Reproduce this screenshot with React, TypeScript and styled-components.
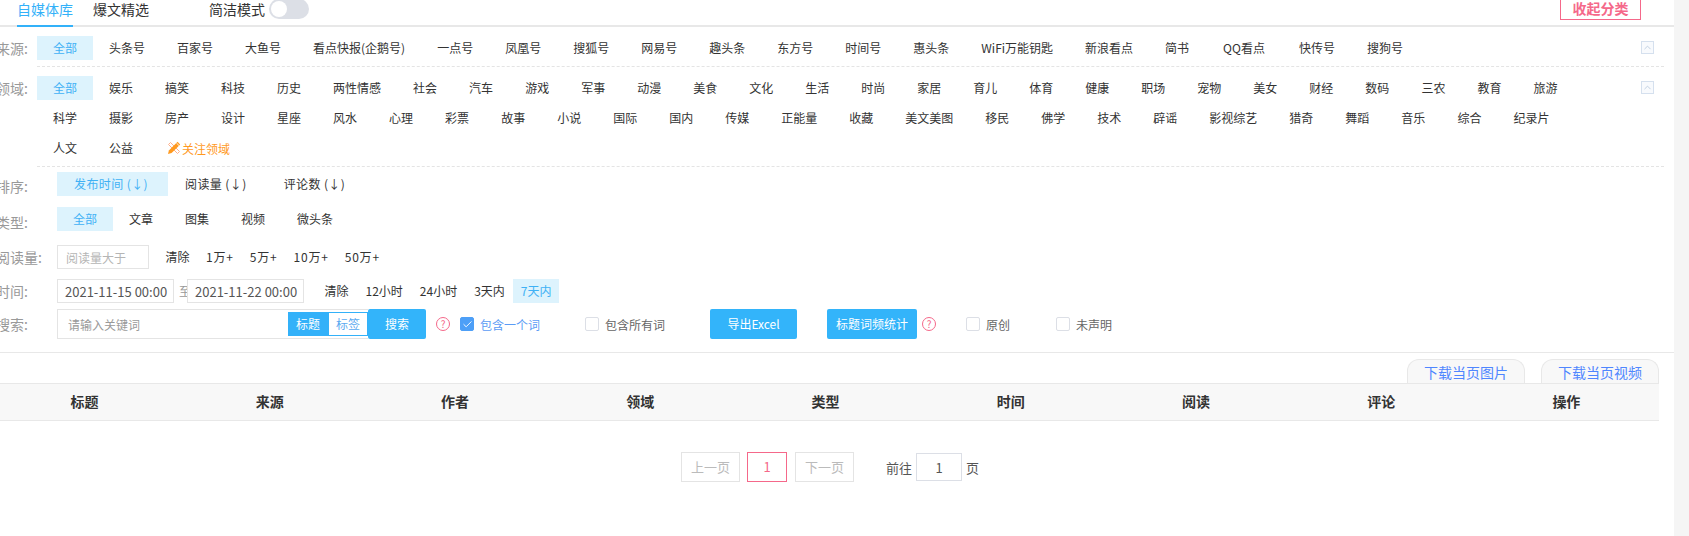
import styled, { createGlobalStyle } from "styled-components";
import { Check, ChevronUp } from "lucide-react";

const GlobalStyle = createGlobalStyle`
    html, body { margin: 0; padding: 0; height: 100%; overflow: hidden; background: #fff; }
    body { font-family: "Noto Sans CJK SC", "Open Sans", sans-serif; font-size: 12px; color: #333; }
    input { font-family: inherit; outline: none; }
`

const Layout = styled.div`display: flex; width: 1689px; height: 536px; overflow: hidden;`
const Main = styled.div`width: 1674px; flex: none;`
const Scrollbar = styled.div`width: 15px; flex: none; background: #f5f5f5;`

const Header = styled.div`
    display: flex;
    height: 25px;
    border-bottom: 2px solid #e8e8e8;
    padding-left: 17px;
`
const Tab = styled.div<{ $active?: boolean }>`
    height: 25px;
    margin-right: 20px;
    font-size: 14px;
    line-height: 18px;
    color: ${p => p.$active ? "#33b1f9" : "#333"};
    border-bottom: 2px solid ${p => p.$active ? "#33b1f9" : "transparent"};
`
const SwitchLabel = styled.div`margin-left: 40px; font-size: 14px; line-height: 18px; color: #333;`
const Switch = styled.div`
    position: relative;
    width: 40px;
    height: 20px;
    margin: -1px 0 0 4px;
    border-radius: 10px;
    background: #dcdfe6;
`
const Knob = styled.span`
    position: absolute;
    top: 2px;
    left: 2px;
    width: 16px;
    height: 16px;
    border-radius: 50%;
    background: #fff;
`
const CollapseAll = styled.div`
    margin: -6px 33px 0 auto;
    width: 79px;
    height: 24px;
    border: 1px solid #f5688a;
    color: #f5688a;
    font-size: 14px;
    font-weight: 700;
    line-height: 26px;
    text-align: center;
`

const Filters = styled.div`margin-left: -4px; width: 1668px; padding-top: 9px;`
const Row = styled.div<{ $top?: number }>`
    display: flex;
    align-items: flex-start;
    margin-top: ${p => p.$top ?? 0}px;
    min-height: 24px;
`
const Label = styled.div<{ $width: number; $drop?: number }>`
    flex: none;
    width: ${p => p.$width}px;
    line-height: 24px;
    font-size: 14px;
    color: #999;
    white-space: nowrap;
    padding-top: ${p => p.$drop ?? 0}px;
`
const Tags = styled.div`
    display: flex;
    flex-wrap: wrap;
    row-gap: 6px;
    width: 1580px;
`
const Tag = styled.div<{ $active?: boolean; $pad?: number }>`
    height: 24px;
    line-height: 24px;
    padding: 0 ${p => p.$pad ?? 16}px;
    white-space: nowrap;
    color: ${p => p.$active ? "#3fb1f5" : "#333"};
    background: ${p => p.$active ? "#ddf3fd" : "transparent"};
`
const SortTag = styled(Tag)`
    padding: 0 20px 0 17px;
    letter-spacing: 0.4px;
`
const Follow = styled.div`
    display: flex;
    align-items: center;
    gap: 1px;
    height: 24px;
    margin-left: 18px;
    color: #ff9a1f;
`
const Fold = styled.div`
    display: flex;
    align-items: center;
    justify-content: center;
    flex: none;
    width: 11px;
    height: 11px;
    margin: 5px 0 0 24px;
    border: 1px solid #d5e0ee;
    background: #f8fafd;
    color: #bccddf;
`
const Divider = styled.div`
    margin: 6px 0 0 41px;
    border-top: 1px dashed #e4e4e4;
`
const TextInput = styled.input<{ $width: number }>`
    box-sizing: border-box;
    flex: none;
    width: ${p => p.$width}px;
    height: 24px;
    padding: 0 8px;
    border: 1px solid #e4e4e4;
    font-size: 12px;
    color: #555;
    &::placeholder { color: #b5b5b5; }
`
const DateInput = styled(TextInput)`font-size: 13px; padding: 0 0 0 7px;`
const DateSep = styled.span`
    flex: none;
    width: 8px;
    padding-left: 5px;
    color: #999;
    white-space: nowrap;
    line-height: 24px;
    overflow: hidden;
`
const Links = styled.div<{ $left: number }>`
    display: flex;
    margin-left: ${p => p.$left}px;
`
const QuickLink = styled.div<{ $active?: boolean; $wide?: boolean }>`
    height: 24px;
    line-height: 24px;
    padding: 0 ${p => p.$wide ? 8 : p.$active ? 7.5 : 8.5}px;
    white-space: nowrap;
    letter-spacing: ${p => p.$wide ? "0.8px" : "0"};
    color: ${p => p.$active ? "#3fb1f5" : "#333"};
    background: ${p => p.$active ? "#ddf3fd" : "transparent"};
`

const SearchRow = styled.div`display: flex; align-items: center; height: 30px; margin-top: 6px;`
const SearchBox = styled.div`
    display: flex;
    align-items: center;
    box-sizing: border-box;
    flex: none;
    width: 311px;
    height: 30px;
    border: 1px solid #e4e4e4;
    border-right: none;
`
const SearchInput = styled.input`
    flex: 1;
    min-width: 0;
    border: none;
    padding: 0 10px;
    font-size: 12px;
    &::placeholder { color: #999; }
`
const Toggle = styled.div<{ $active?: boolean }>`
    box-sizing: border-box;
    width: 40px;
    height: 24px;
    line-height: 22px;
    text-align: center;
    border: 1px solid #33b1f9;
    color: ${p => p.$active ? "#fff" : "#5aa9f0"};
    background: ${p => p.$active ? "#33b1f9" : "#fff"};
`
const Button = styled.div<{ $width: number; $left?: number }>`
    flex: none;
    width: ${p => p.$width}px;
    height: 30px;
    margin-left: ${p => p.$left ?? 0}px;
    border-radius: 2px;
    background: #33b4fa;
    color: #fff;
    line-height: 30px;
    text-align: center;
`
const Help = styled.span<{ $left: number }>`
    flex: none;
    box-sizing: border-box;
    width: 14px;
    height: 14px;
    margin-left: ${p => p.$left}px;
    border: 1px solid #f5688a;
    border-radius: 50%;
    color: #f5688a;
    font-size: 10px;
    line-height: 12px;
    text-align: center;
`
const Box = styled.span<{ $checked?: boolean; $left: number }>`
    display: flex;
    align-items: center;
    justify-content: center;
    flex: none;
    box-sizing: border-box;
    width: 14px;
    height: 14px;
    margin-left: ${p => p.$left}px;
    border-radius: 2px;
    border: 1px solid ${p => p.$checked ? "#4d9ff7" : "#dcdfe6"};
    background: ${p => p.$checked ? "#4d9ff7" : "#fff"};
    color: #fff;
`
const BoxText = styled.span<{ $checked?: boolean }>`
    margin-left: 6px;
    white-space: nowrap;
    color: ${p => p.$checked ? "#5b9cf5" : "#666"};
`

const Results = styled.div`margin-top: 13px; border-top: 1px solid #e8e8e8;`
const ResultTabs = styled.div`display: flex; justify-content: flex-end; gap: 16px; width: 1659px; padding-top: 6px;`
const ResultTab = styled.div`
    box-sizing: border-box;
    width: 118px;
    height: 24px;
    border: 1px solid #e8e8e8;
    border-bottom: none;
    border-radius: 12px 12px 0 0;
    background: #f8f8f8;
    color: #4f86ff;
    font-size: 14px;
    line-height: 24px;
    text-align: center;
`
const TableHead = styled.div`
    display: grid;
    grid-template-columns: repeat(9, 1fr);
    box-sizing: border-box;
    margin-left: -8px;
    width: 1667px;
    height: 38px;
    border-top: 1px solid #e8e8e8;
    border-bottom: 1px solid #e8e8e8;
    background: #f8f8f8;
`
const HeadCell = styled.div`
    font-size: 14px;
    font-weight: 700;
    line-height: 35px;
    text-align: center;
    color: #333;
`

const Pager = styled.div`display: flex; align-items: center; margin: 31px 0 0 681px;`
const PageButton = styled.div<{ $width: number; $current?: boolean }>`
    box-sizing: border-box;
    width: ${p => p.$width}px;
    height: 30px;
    margin-right: ${p => p.$current ? 8 : 7}px;
    border: 1px solid ${p => p.$current ? "#f5688a" : "#e4e4e4"};
    color: ${p => p.$current ? "#f5688a" : "#bbb"};
    font-size: 13px;
    line-height: 28px;
    text-align: center;
`
const GoLabel = styled.span<{ $left: number }>`margin-left: ${p => p.$left}px; font-size: 13px; color: #555;`
const GoInput = styled.input`
    box-sizing: border-box;
    width: 46px;
    height: 28px;
    margin-left: 4px;
    border: 1px solid #dcdfe6;
    font-size: 13px;
    color: #555;
    text-align: center;
`

const sources = ["全部", "头条号", "百家号", "大鱼号", "看点快报(企鹅号)", "一点号", "凤凰号", "搜狐号", "网易号", "趣头条", "东方号", "时间号", "惠头条", "WiFi万能钥匙", "新浪看点", "简书", "QQ看点", "快传号", "搜狗号"]
const domains = ["全部", "娱乐", "搞笑", "科技", "历史", "两性情感", "社会", "汽车", "游戏", "军事", "动漫", "美食", "文化", "生活", "时尚", "家居", "育儿", "体育", "健康", "职场", "宠物", "美女", "财经", "数码", "三农", "教育", "旅游", "科学", "摄影", "房产", "设计", "星座", "风水", "心理", "彩票", "故事", "小说", "国际", "国内", "传媒", "正能量", "收藏", "美文美图", "移民", "佛学", "技术", "辟谣", "影视综艺", "猎奇", "舞蹈", "音乐", "综合", "纪录片", "人文", "公益"]
const sorts = ["发布时间 (↓)", "阅读量 (↓)", "评论数 (↓)"]
const types = ["全部", "文章", "图集", "视频", "微头条"]
const columns = ["标题", "来源", "作者", "领域", "类型", "时间", "阅读", "评论", "操作"]

// pencil laid over a ruler, the 关注领域 icon
const EditIcon = () => (
    <svg width="14" height="14" viewBox="0 0 14 14">
        <path d="M1.5 3.5 3.5 1.5 12.5 10.5 10.5 12.5Z" fill="#fff" stroke="#ffb08a" strokeWidth="1" />
        <path d="M10.5 .8 13.2 3.5 4.6 12.1 1 13 1.9 9.4Z" fill="#ff9a1f" />
        <path d="M9.4 2 12 4.6" stroke="#fff" strokeWidth=".8" />
    </svg>
)

const App = () => (
    <Layout>
        <GlobalStyle />
        <Main>
            <Header>
                <Tab $active>自媒体库</Tab>
                <Tab>爆文精选</Tab>
                <SwitchLabel>简洁模式</SwitchLabel>
                <Switch><Knob /></Switch>
                <CollapseAll>收起分类</CollapseAll>
            </Header>
            <Filters>
                <Row>
                    <Label $width={41}>来源:</Label>
                    <Tags>
                        {sources.map((s, i) => <Tag key={s} $active={i === 0} $pad={s === "QQ看点" ? 18 : 16}>{s}</Tag>)}
                    </Tags>
                    <Fold><ChevronUp size={11} /></Fold>
                </Row>
                <Divider />
                <Row $top={9}>
                    <Label $width={41}>领域:</Label>
                    <Tags>
                        {domains.map((d, i) => <Tag key={d + i} $active={i === 0}>{d}</Tag>)}
                        <Follow><EditIcon />关注领域</Follow>
                    </Tags>
                    <Fold><ChevronUp size={11} /></Fold>
                </Row>
                <Divider />
                <Row $top={5}>
                    <Label $width={61} $drop={2}>排序:</Label>
                    {sorts.map((s, i) => <SortTag key={s} $active={i === 0}>{s}</SortTag>)}
                </Row>
                <Row $top={9}>
                    <Label $width={61} $drop={3}>类型:</Label>
                    {types.map((t, i) => <Tag key={t} $active={i === 0}>{t}</Tag>)}
                </Row>
                <Row $top={11}>
                    <Label $width={61}>阅读量:</Label>
                    <TextInput $width={92} placeholder="阅读量大于" />
                    <Links $left={8}>
                        <QuickLink>清除</QuickLink>
                        {["1万+", "5万+", "10万+", "50万+"].map(l => <QuickLink key={l} $wide>{l}</QuickLink>)}
                    </Links>
                </Row>
                <Row $top={10}>
                    <Label $width={61}>时间:</Label>
                    <DateInput $width={117} readOnly value="2021-11-15 00:00" />
                    <DateSep>至</DateSep>
                    <DateInput $width={117} readOnly value="2021-11-22 00:00" />
                    <Links $left={12}>
                        {["清除", "12小时", "24小时", "3天内"].map(l => <QuickLink key={l}>{l}</QuickLink>)}
                        <QuickLink $active>7天内</QuickLink>
                    </Links>
                </Row>
                <SearchRow>
                    <Label $width={61}>搜索:</Label>
                    <SearchBox>
                        <SearchInput placeholder="请输入关键词" />
                        <Toggle $active>标题</Toggle>
                        <Toggle>标签</Toggle>
                    </SearchBox>
                    <Button $width={58}>搜索</Button>
                    <Help $left={10}>?</Help>
                    <Box $checked $left={10}><Check size={11} strokeWidth={2} /></Box>
                    <BoxText $checked>包含一个词</BoxText>
                    <Box $left={45} />
                    <BoxText>包含所有词</BoxText>
                    <Button $width={87} $left={45}>导出Excel</Button>
                    <Button $width={90} $left={30}>标题词频统计</Button>
                    <Help $left={5}>?</Help>
                    <Box $left={30} />
                    <BoxText>原创</BoxText>
                    <Box $left={46} />
                    <BoxText>未声明</BoxText>
                </SearchRow>
            </Filters>
            <Results>
                <ResultTabs>
                    <ResultTab>下载当页图片</ResultTab>
                    <ResultTab>下载当页视频</ResultTab>
                </ResultTabs>
                <TableHead>
                    {columns.map(c => <HeadCell key={c}>{c}</HeadCell>)}
                </TableHead>
                <Pager>
                    <PageButton $width={59}>上一页</PageButton>
                    <PageButton $width={40} $current>1</PageButton>
                    <PageButton $width={59}>下一页</PageButton>
                    <GoLabel $left={25}>前往</GoLabel>
                    <GoInput readOnly value="1" />
                    <GoLabel $left={4}>页</GoLabel>
                </Pager>
            </Results>
        </Main>
        <Scrollbar />
    </Layout>
)

export default App;
